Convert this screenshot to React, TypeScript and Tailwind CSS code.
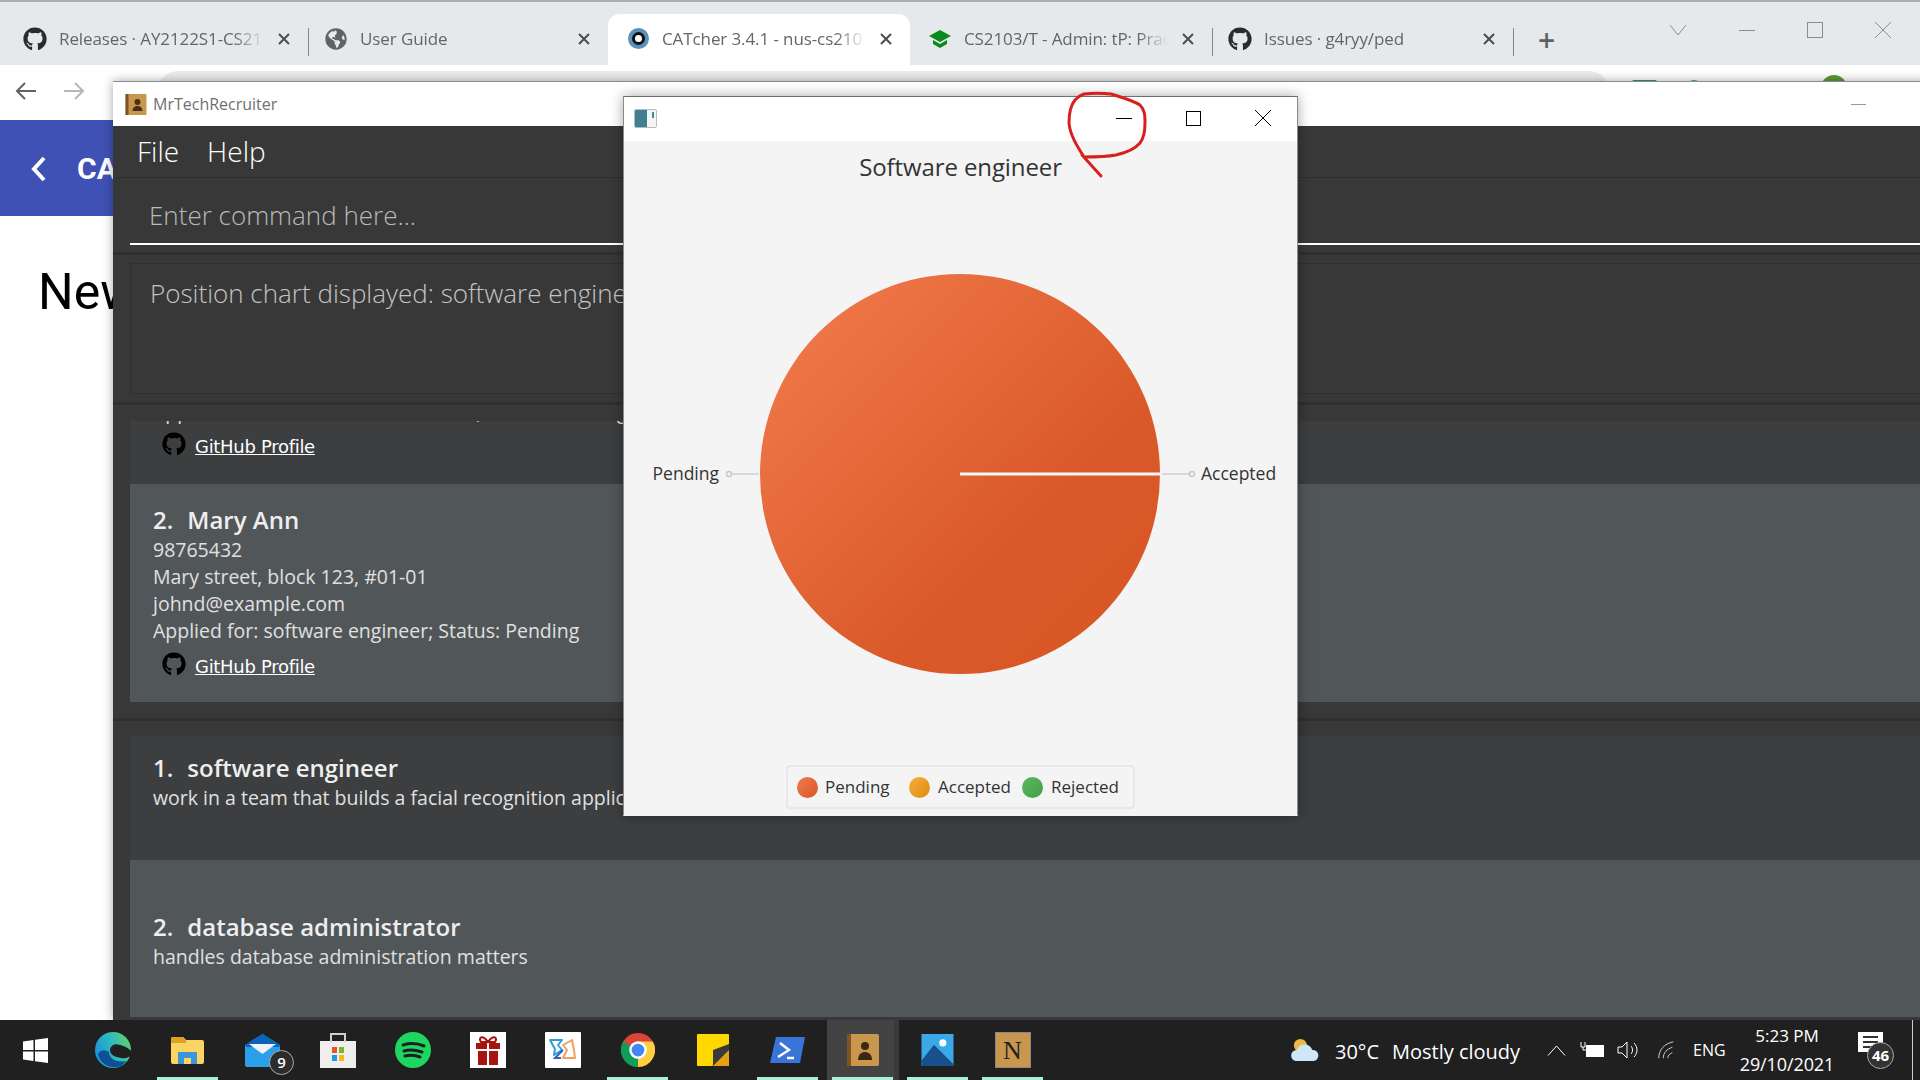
import React from "react";
import { FaGithub, FaGlobeAmericas } from "react-icons/fa";

const sans = "font-['Open_Sans','Noto_Sans',sans-serif]";

function Tab({ icon, title, active, w, pl }: { icon: React.ReactNode; title: string; active?: boolean; w: number; pl: number }) {
  return (
    <div className={`relative flex h-[51px] items-center pb-[2px] pr-[18px] ${active ? "bg-white rounded-t-xl" : ""}`} style={{ width: w, paddingLeft: pl }}>
      <div className="flex h-[24px] w-[24px] shrink-0 items-center justify-center">{icon}</div>
      <div className="ml-[12px] flex-1 overflow-hidden whitespace-nowrap text-[17px] tracking-[-0.1px] text-[#62666b] [mask-image:linear-gradient(90deg,#000_85%,transparent)]">{title}</div>
      <svg className="ml-[14px] shrink-0" width="12" height="12" viewBox="0 0 12 12" stroke="#4a4d50" strokeWidth="2"><path d="M1 1l10 10M11 1 1 11" /></svg>
    </div>
  );
}
const Sep = () => <div className="mb-[9px] h-[28px] w-px shrink-0 bg-[#80868b]" />;

function Profile() {
  return (
    <div className="flex h-[31px] items-start pl-[9px] pt-[8px]">
      <FaGithub className="h-[24px] w-[24px] shrink-0 text-black" />
      <span className="ml-[9px] mt-[3px] font-['DejaVu_Sans'] text-[18px] leading-[24px] tracking-[-0.3px] text-white underline">GitHub Profile</span>
    </div>
  );
}

function Name({ n, children }: { n: string; children: React.ReactNode }) {
  return (
    <div className="text-[24px] font-semibold leading-[32px] text-[#eeeeee]">
      <span className="mr-[14px]">{n}</span>{children}
    </div>
  );
}
const Line = ({ children }: { children: React.ReactNode }) => (
  <div className="whitespace-nowrap text-[19.5px] leading-[27px] text-[#e0e0e0]">{children}</div>
);

function TaskIcon({ children, active, bar }: { children: React.ReactNode; active?: boolean; bar?: boolean }) {
  return (
    <div className="relative flex h-[60px] w-[75px] shrink-0 items-center justify-center">
      {active && <div className="absolute inset-y-0 left-[2px] right-[6px] bg-[#434343]" />}
      {active && <div className="absolute inset-y-0 right-[1px] w-[5px] bg-[#3a3a3a]" />}
      <div className="relative flex">{children}</div>
      {bar && <div className="absolute bottom-0 left-[7px] right-[7px] h-[3px] bg-[#a8f0d8]" />}
    </div>
  );
}

export default function App() {
  return (
    <div className={`relative h-[1080px] w-[1920px] overflow-hidden bg-white ${sans}`}>
      <div className="flex h-[65px] items-end border-t-2 border-[#a9adb0] bg-[#e6e9ec] pl-[12px]">
        <Tab w={296} pl={11} icon={<FaGithub className="h-[24px] w-[24px] text-[#2b2b2b]" />} title="Releases · AY2122S1-CS21" />
        <Sep />
        <Tab w={299} pl={15} icon={<FaGlobeAmericas className="h-[22px] w-[22px] text-[#5f6368]" />} title="User Guide" />
        <Tab w={302} pl={18} active icon={<div className="flex h-[21px] w-[21px] items-center justify-center rounded-full bg-[#5a91b8]"><div className="h-[13px] w-[13px] rounded-full border-[3px] border-[#111] bg-white" /></div>} title="CATcher 3.4.1 - nus-cs2103" />
        <Tab w={302} pl={18} icon={<svg viewBox="0 0 24 24" className="h-[24px] w-[24px]"><path d="M12 3 1 9l11 6 11-6z" fill="#0a8a1a" /><path d="M5 13v4l7 4 7-4v-4l-7 4z" fill="#0a8a1a" /></svg>} title="CS2103/T - Admin: tP: Practical" />
        <Sep />
        <Tab w={300} pl={15} icon={<FaGithub className="h-[24px] w-[24px] text-[#2b2b2b]" />} title="Issues · g4ryy/ped" />
        <Sep />
        <div className="mb-[11px] ml-[24px] flex h-[28px] items-center text-[30px] font-semibold leading-none text-[#5f6368]">+</div>
        <div className="mb-[27px] ml-auto flex h-[16px] items-center gap-[52px] pr-[29px]">
          <svg width="18" height="12" viewBox="0 0 18 12" fill="none" stroke="#8a8d90" strokeWidth="1"><path d="M1 1l8 10 8-10" /></svg>
          <div className="h-px w-[16px] bg-[#8a8d90]" />
          <div className="h-[16px] w-[16px] border border-[#8a8d90]" />
          <svg width="16" height="16" viewBox="0 0 16 16" stroke="#8a8d90" strokeWidth="1"><path d="M0 0l16 16M16 0L0 16" /></svg>
        </div>
      </div>

      <div className="relative flex h-[55px] items-center bg-white pb-[4px] pl-[15px]">
        <svg width="22" height="20" viewBox="0 0 22 20" fill="none" stroke="#5f6368" strokeWidth="2"><path d="M21 10H2M10 2l-8 8 8 8" /></svg>
        <svg className="ml-[26px]" width="22" height="20" viewBox="0 0 22 20" fill="none" stroke="#b5b8bb" strokeWidth="2"><path d="M1 10h19M12 2l8 8-8 8" /></svg>
        <div className="ml-[73px] h-[40px] w-[1451px] self-start translate-y-[6px] rounded-full bg-[#ebedef]" />
        <div className="ml-[23px] h-[26px] w-[25px] self-start translate-y-[15px] rounded-[2px] bg-[#3c8f70]" />
        <div className="ml-[28px] h-[18px] w-[18px] self-start translate-y-[15px] rounded-full bg-[#2aa198]" />
        <div className="ml-[118px] h-[26px] w-[26px] self-start translate-y-[10px] rounded-full bg-[#5a9a35]" />
      </div>
      <div className="flex h-[96px] items-center bg-[#3f51b5] pl-[29px] text-white">
        <svg className="mt-[2px]" width="20" height="28" viewBox="0 0 20 28" fill="none" stroke="white" strokeWidth="4"><path d="M15 3 5 14l10 11" /></svg>
        <span className="ml-[28px] font-['Roboto'] text-[30px] font-bold">CATcher</span>
      </div>
      <div className="pl-[38px] pt-[46px] font-['Roboto'] text-[50px] leading-[60px] text-black">New Issue</div>

      <div className="absolute left-[113px] top-[81px] flex h-[939px] w-[1860px] flex-col border-t border-[#8a8d90] shadow-[0_0_10px_rgba(0,0,0,0.35)]">
        <div className="flex h-[44px] shrink-0 items-center bg-white pl-[12px]">
          <svg width="22" height="21" viewBox="0 0 21 21"><rect width="21" height="21" rx="1" fill="#c9964e" /><rect width="3" height="21" fill="#7d5424" /><circle cx="12" cy="8" r="3" fill="#4a3018" /><path d="M7 17c0-4 3-5 5-5s5 1 5 5z" fill="#4a3018" /></svg>
          <span className="ml-[6px] text-[16px] text-[#6f6f6f]">MrTechRecruiter</span>
          <div className="ml-auto mr-[107px] h-px w-[15px] bg-[#9a9a9a]" />
        </div>
        <div className="flex flex-1 flex-col bg-[#383838]">
          <div className="flex h-[52px] shrink-0 items-center gap-[28px] border-b border-[#2d2d2d] pb-[2px] pl-[24px] text-[28px] font-light text-white">
            <span>File</span><span>Help</span>
          </div>
          <div className="h-[77px] shrink-0 border-b-[3px] border-[#2f2f2f] px-[17px]">
            <div className="flex h-[67px] items-center border-b-2 border-white pb-[5px] pl-[19px] pt-[15px] text-[26px] font-light text-[#b8b8b8]">Enter command here...</div>
          </div>
          <div className="h-[150px] shrink-0 border-b-[3px] border-[#2f2f2f] px-[17px] pt-[8px]">
            <div className="h-[131px] border border-[#2f2f2f] pl-[19px] pt-[9px] text-[26px] font-light leading-[40px] text-[#c4c4c4]">Position chart displayed: software engineer</div>
          </div>
          <div className="h-[316px] shrink-0 border-b-[3px] border-[#2f2f2f] px-[17px] pt-[16px]">
            <div className="h-[63px] overflow-hidden bg-[#3c3e3f] pl-[23px]">
              <div className="-mt-[23px]"><Line>Applied for: database administrator; Status: Pending</Line></div>
              <div className="-mt-[1px]"><Profile /></div>
            </div>
            <div className="h-[218px] bg-[#515658] pl-[23px] pt-[20px]">
              <Name n="2.">Mary Ann</Name>
              <Line>98765432</Line>
              <Line>Mary street, block 123, #01-01</Line>
              <Line>johnd@example.com</Line>
              <Line>Applied for: software engineer; Status: Pending</Line>
              <Profile />
            </div>
          </div>
          <div className="flex-1 overflow-hidden px-[17px] pt-[15px]">
            <div className="h-[124px] bg-[#3c3e3f] pl-[23px] pt-[16px]">
              <Name n="1.">software engineer</Name>
              <Line>work in a team that builds a facial recognition application</Line>
            </div>
            <div className="h-[157px] bg-[#515658] pl-[23px] pt-[51px]">
              <Name n="2.">database administrator</Name>
              <Line>handles database administration matters</Line>
            </div>
          </div>
        </div>
      </div>

      <div className="absolute left-[623px] top-[96px] flex h-[720px] w-[675px] flex-col border border-x-[#8a8a8a] border-b-transparent border-t-[#6f6f6f] bg-[#f4f4f4] shadow-[0_0_12px_rgba(0,0,0,0.35)]">
        <div className="flex h-[44px] shrink-0 items-center bg-white pb-[2px] pl-[10px]">
          <div className="relative h-[19px] w-[23px] rounded-[2px] border border-[#b5bcc0] bg-[linear-gradient(90deg,#3f7f8f_0_58%,#f4f6f6_58%)]">
            <div className="absolute right-[2px] top-[2px] h-[6px] w-[2px] bg-[#3f8f8f]" />
          </div>
          <div className="ml-auto flex items-center gap-[54px] pr-[26px]">
            <div className="h-px w-[16px] bg-black" />
            <div className="h-[15px] w-[15px] border border-black" />
            <svg width="16" height="16" viewBox="0 0 16 16" stroke="black" strokeWidth="1"><path d="M0 0l16 16M16 0L0 16" /></svg>
          </div>
        </div>
        <div className="shrink-0 text-center text-[24px] leading-[52px] tracking-[-0.1px] text-[#333]">Software engineer</div>
        <svg className="h-[530px] w-full shrink-0" viewBox="0 0 673 530">
          <defs>
            <linearGradient id="pie" x1="0" y1="0" x2="1" y2="1">
              <stop offset="0.14" stopColor="#ee7547" />
              <stop offset="0.65" stopColor="#da5928" />
              <stop offset="1" stopColor="#d85624" />
            </linearGradient>
          </defs>
          <circle cx="336" cy="281" r="200" fill="url(#pie)" />
          <line x1="336" y1="281" x2="536" y2="281" stroke="#f8f8f8" strokeWidth="3" />
          <line x1="108" y1="281" x2="135" y2="281" stroke="#cfcfcf" strokeWidth="1.5" />
          <line x1="538" y1="281" x2="566" y2="281" stroke="#cfcfcf" strokeWidth="1.5" />
          <circle cx="105" cy="281" r="2.5" fill="#f4f4f4" stroke="#c8c8c8" strokeWidth="1.5" />
          <circle cx="568" cy="281" r="2.5" fill="#f4f4f4" stroke="#c8c8c8" strokeWidth="1.5" />
          <text x="95" y="287" textAnchor="end" fontSize="17.5" fill="#333" fontFamily="Open Sans">Pending</text>
          <text x="577" y="287" fontSize="17.5" fill="#333" fontFamily="Open Sans">Accepted</text>
        </svg>
        <div className="mt-[42px] flex justify-center">
          <div className="flex h-[44px] w-[349px] items-center rounded-[4px] border-2 border-[#e8e8e8] pl-[9px] text-[17px] text-[#333]">
            <span className="h-[21px] w-[21px] shrink-0 rounded-full bg-[linear-gradient(135deg,#f07c4f,#d85624)]" /><span className="ml-[7px] w-[84px] shrink-0">Pending</span>
            <span className="h-[21px] w-[21px] shrink-0 rounded-full bg-[linear-gradient(135deg,#f5b03a,#e08a10)]" /><span className="ml-[8px] w-[84px] shrink-0">Accepted</span>
            <span className="h-[21px] w-[21px] shrink-0 rounded-full bg-[linear-gradient(135deg,#5db860,#3f9f48)]" /><span className="ml-[8px]">Rejected</span>
          </div>
        </div>
      </div>

      <svg className="pointer-events-none absolute left-[1060px] top-[88px]" width="100" height="95" viewBox="0 0 100 95" fill="none" stroke="#d8201f" strokeWidth="3" strokeLinecap="round" strokeLinejoin="round">
        <path d="M24 6C33 5 42 5 51 6 60 9 72 12 80 17 85 22 85 28 85 35 85 42 84 50 80 55 74 62 65 65 56 67 45 69 34 69 24 69 17 58 10 47 9 35 9 27 10 18 15 12 18 9 21 7 24 6ZM22 67 41 88" />
      </svg>

      <div className="absolute bottom-0 left-0 flex h-[60px] w-[1920px] items-center bg-[#202020] text-white">
        <div className="flex h-[60px] w-[75px] shrink-0 items-center justify-center pr-[4px]">
          <svg width="25" height="25" viewBox="0 0 25 25" fill="white"><path d="M0 3.5 10.5 2v10H0zM12 1.8 25 0v12H12zM0 13.5h10.5V23L0 21.5zM12 13.5h13V25l-13-1.8z" /></svg>
        </div>
        <TaskIcon>
          <svg width="36" height="36" viewBox="0 0 36 36">
            <defs><linearGradient id="edge" x1="0" y1="0.7" x2="1" y2="0.3"><stop offset="0" stopColor="#1a8fdc" /><stop offset="0.55" stopColor="#2fbbc0" /><stop offset="1" stopColor="#5fd06a" /></linearGradient></defs>
            <circle cx="18" cy="18" r="18" fill="url(#edge)" />
            <path d="M3 22C5 32 16 38 26 34L32 29C22 31 14 27 14 20 9 17 5 18 3 22z" fill="#0f4f96" />
            <path d="M15 19C15 13 20 11 25 13 30 14 37 18 37 21 36 26 30 27 26 26 20 25 16 23 15 19z" fill="#202020" />
          </svg>
        </TaskIcon>
        <TaskIcon bar>
          <svg width="33" height="27" viewBox="0 0 33 27"><path d="M0 2a2 2 0 0 1 2-2h10l3 3h16a2 2 0 0 1 2 2v20a2 2 0 0 1-2 2H2a2 2 0 0 1-2-2z" fill="#fcd462" /><path d="M0 2a2 2 0 0 1 2-2h10l3 3v3H0z" fill="#dfa21f" /><path d="M7 27V15h19v12h-6v-6h-7v6z" fill="#3a95dc" /></svg>
        </TaskIcon>
        <TaskIcon>
          <div className="relative">
            <svg width="35" height="33" viewBox="0 0 35 33"><path d="M0 11 17.5 0 35 11v20a2 2 0 0 1-2 2H2a2 2 0 0 1-2-2z" fill="#2ba0ea" /><path d="M0 11 17.5 0 35 11l-1 2H1z" fill="#0b62b8" /><path d="M4 10h27L17.5 20z" fill="#eef2f5" /></svg>
            <div className="absolute -bottom-[8px] -right-[14px] flex h-[25px] w-[25px] items-center justify-center rounded-full border border-[#aaa] bg-[#2c2c2c] text-[15px] font-semibold leading-none">9</div>
          </div>
        </TaskIcon>
        <TaskIcon>
          <svg width="36" height="36" viewBox="0 0 36 36"><rect y="9" width="36" height="27" fill="#eeeeee" /><path d="M11 10V2h14v8" fill="none" stroke="#cfcfcf" strokeWidth="2" /><rect x="12" y="15" width="5" height="6" fill="#e8542a" /><rect x="19" y="15" width="5" height="6" fill="#7cb82a" /><rect x="12" y="23" width="5" height="6" fill="#1f9be0" /><rect x="19" y="23" width="5" height="6" fill="#f8b815" /></svg>
        </TaskIcon>
        <TaskIcon>
          <svg width="36" height="36" viewBox="0 0 36 36"><circle cx="18" cy="18" r="18" fill="#1ed760" /><path d="M8 13c7-2 14-2 21 1M9 19c6-2 12-1 18 1M10 24c5-1 10-1 15 1" fill="none" stroke="#202020" strokeWidth="3" strokeLinecap="round" /></svg>
        </TaskIcon>
        <TaskIcon>
          <svg width="36" height="36" viewBox="0 0 36 36"><rect width="36" height="36" fill="white" /><rect x="6" y="11" width="24" height="6" fill="#a8120f" /><rect x="8" y="19" width="20" height="14" fill="#a8120f" /><rect x="17" y="8" width="2" height="25" fill="white" /><path d="M18 10C12 2 8 6 11 10zM18 10c6-8 10-4 7 0z" fill="none" stroke="#a8120f" strokeWidth="2" /></svg>
        </TaskIcon>
        <TaskIcon>
          <svg width="36" height="36" viewBox="0 0 36 36"><rect width="36" height="36" rx="1" fill="white" /><path d="M5 8h12l-4 5 4 5-8 5 1-6z" fill="none" stroke="#2f9ed8" strokeWidth="2" strokeLinejoin="round" /><path d="M27 8 18 13l4 5-4 8h12l-1-8z" fill="none" stroke="#f0a060" strokeWidth="2" strokeLinejoin="round" /><path d="M18 18l-8 8h6" fill="none" stroke="#3a5fb0" strokeWidth="2" /></svg>
        </TaskIcon>
        <TaskIcon bar>
          <svg width="34" height="34" viewBox="0 0 36 36"><circle cx="18" cy="18" r="18" fill="#db4437" /><path d="M18 18 2.4 9A18 18 0 0 0 18 36L26 22z" fill="#0f9d58" /><path d="M18 18 18 36A18 18 0 0 0 33.6 9H18z" fill="#ffcd40" /><circle cx="18" cy="18" r="8" fill="#4285f4" stroke="white" strokeWidth="2.5" /></svg>
        </TaskIcon>
        <TaskIcon>
          <svg width="32" height="32" viewBox="0 0 32 32"><rect width="32" height="32" rx="1" fill="#ffd800" /><path d="M32 14v18H14z" fill="#e8a010" /><path d="M32 10 16 16v16l16-16z" fill="#3a3a3a" /></svg>
        </TaskIcon>
        <TaskIcon bar>
          <svg width="35" height="26" viewBox="0 0 35 26"><path d="M6 0h29l-5 26H0z" fill="#3a74d8" /><path d="M10 6l9 7-11 7M17 21h7" fill="none" stroke="white" strokeWidth="2.5" /></svg>
        </TaskIcon>
        <TaskIcon active bar>
          <svg width="32" height="32" viewBox="0 0 32 32"><rect width="32" height="32" rx="2" fill="#c9964e" /><rect width="4" height="32" fill="#7d5424" /><circle cx="18" cy="12" r="4" fill="#3a2814" /><path d="M11 26c0-6 4-8 7-8s7 2 7 8z" fill="#3a2814" /></svg>
        </TaskIcon>
        <TaskIcon bar>
          <svg width="33" height="32" viewBox="0 0 36 36"><rect width="36" height="36" fill="#3ba8ea" /><circle cx="24" cy="10" r="4" fill="white" /><path d="M0 30 14 12l22 22v2H0z" fill="#17508c" /></svg>
        </TaskIcon>
        <TaskIcon bar>
          <div className="flex h-[36px] w-[36px] items-center justify-center border border-[#888] bg-[#c9964e] font-['Liberation_Serif'] text-[26px] text-[#222]">N</div>
        </TaskIcon>

        <div className="ml-auto flex items-center pr-[22px]">
          <svg width="32" height="24" viewBox="0 0 32 26"><circle cx="11" cy="8" r="7" fill="#f0b840" /><path d="M7 25a6 6 0 0 1 0-12 9 9 0 0 1 17 0 6 6 0 0 1 1 12z" fill="#cfe6f8" /></svg>
          <span className="ml-[14px] mt-[3px] w-[45px] whitespace-nowrap text-[20px]">30°C</span>
          <span className="ml-[12px] mt-[3px] w-[128px] whitespace-nowrap text-[20px]">Mostly cloudy</span>
          <svg className="ml-[27px]" width="19" height="11" viewBox="0 0 19 11" fill="none" stroke="white"><path d="M1 10.5 9.5 1 18 10.5" /></svg>
          <svg className="ml-[14px]" width="24" height="16" viewBox="0 0 24 16"><path d="M1 0v5h4V0" fill="none" stroke="white" /><path d="M3 5v3h3" fill="none" stroke="white" /><rect x="6" y="3" width="18" height="12" fill="white" /></svg>
          <svg className="ml-[13px]" width="22" height="20" viewBox="0 0 22 20" fill="none" stroke="white"><path d="M1 7h4l5-5v16l-5-5H1zM14 6c2 2 2 6 0 8M17 3c4 4 4 10 0 14" /></svg>
          <svg className="ml-[17px]" width="20" height="20" viewBox="0 0 22 20" fill="none" stroke="#ddd"><path d="M3 19C3 10 9 3 19 1M8 19c0-6 4-10 10-12M13 19c0-3 2-5 5-6" /></svg>
          <span className="ml-[17px] w-[32px] whitespace-nowrap text-[16px]">ENG</span>
          <div className="ml-[14px] flex w-[96px] flex-col items-center leading-[28px]"><span className="text-[17px]">5:23 PM</span><span className="text-[18px] tracking-[-0.1px]">29/10/2021</span></div>
          <div className="relative ml-[23px] h-[36px] w-[40px]">
            <div className="absolute left-0 top-0 flex h-[20px] w-[25px] flex-col justify-center gap-[3px] bg-white px-[5px]"><div className="h-[2px] bg-[#333]" /><div className="h-[2px] bg-[#333]" /><div className="h-[2px] bg-[#333]" /></div>
            <div className="absolute left-[9px] top-[10px] flex h-[27px] w-[27px] items-center justify-center rounded-full border border-[#aaa] bg-[#333] text-[15px] font-bold leading-none">46</div>
          </div>
        </div>
        <div className="absolute bottom-0 right-[7px] top-0 w-px bg-[#cccccc]" />
      </div>
    </div>
  );
}
